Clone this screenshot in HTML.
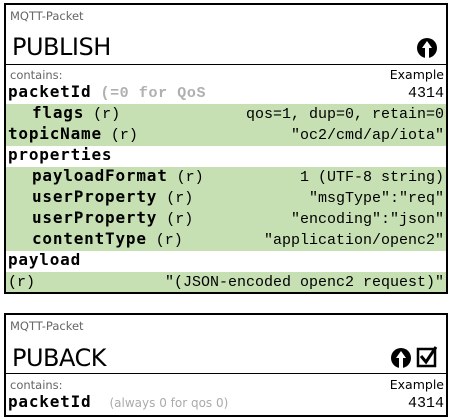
<!DOCTYPE html>
<html><head><style>
body{margin:0;background:#fff;width:452px;height:420px;position:relative;overflow:hidden}
.box{position:absolute;left:4px;width:440px;border:2px solid #000;}
.sm{position:absolute;left:4px;font:11.5px "DejaVu Sans",sans-serif;color:#666}
.title{position:absolute;left:6px;font:24px "DejaVu Sans",sans-serif;color:#000;letter-spacing:-0.5px}
.sep{position:absolute;left:0;right:0;height:1px;background:#000}
.ex{position:absolute;right:2px;font:12.5px "DejaVu Sans",sans-serif;color:#000}
.row{position:absolute;left:0;right:0;height:21px;font:15px "Liberation Mono","DejaVu Sans Mono",monospace;line-height:21px;white-space:pre}
.g{background:#c6e0b4}
.row b{font-family:"DejaVu Sans Mono",monospace;font-weight:bold;font-size:16px;letter-spacing:0.8px;line-height:10px}
.row .l{position:absolute;left:2px}
.row .i{left:26px}
.row .r{position:absolute;right:2px}
.gr{color:#b0b0b0;font-weight:bold;letter-spacing:0.6px}
</style></head><body>
<div class="box" style="top:3px;height:287px">
 <div class="sm" style="top:4px">MQTT-Packet</div>
 <div class="title" style="top:28px">PUBLISH</div>
 <svg style="position:absolute;left:410px;top:32px" width="22" height="22" viewBox="0 0 22 22"><circle cx="11" cy="11" r="10" fill="#000"/><path d="M9 21V11H6L11 4l5 7h-3v10z" fill="#fff"/></svg>
 <div class="sep" style="top:59px"></div>
 <div class="sm" style="top:63px">contains:</div>
 <div class="ex" style="top:62px">Example</div>
 <div class="row" style="top:78px"><span class="l"><b>packetId</b> <span class="gr">(=0 for QoS</span></span><span class="r">4314</span></div>
 <div class="row g" style="top:99px"><span class="l i"><b>flags</b> (r)</span><span class="r">qos=1, dup=0, retain=0</span></div>
 <div class="row g" style="top:120px"><span class="l"><b>topicName</b> (r)</span><span class="r">"oc2/cmd/ap/iota"</span></div>
 <div class="row" style="top:141px"><span class="l"><b>properties</b></span></div>
 <div class="row g" style="top:162px"><span class="l i"><b>payloadFormat</b> (r)</span><span class="r">1 (UTF-8 string)</span></div>
 <div class="row g" style="top:183px"><span class="l i"><b>userProperty</b> (r)</span><span class="r">"msgType":"req"</span></div>
 <div class="row g" style="top:204px"><span class="l i"><b>userProperty</b> (r)</span><span class="r">"encoding":"json"</span></div>
 <div class="row g" style="top:225px"><span class="l i"><b>contentType</b> (r)</span><span class="r">"application/openc2"</span></div>
 <div class="row" style="top:246px"><span class="l"><b>payload</b></span></div>
 <div class="row g" style="top:267px;height:20px"><span class="l">(r)</span><span class="r">"(JSON-encoded openc2 request)"</span></div>
</div>
<div class="box" style="top:313px;height:100px">
 <div class="sm" style="top:4px">MQTT-Packet</div>
 <div class="title" style="top:29px">PUBACK</div>
 <svg style="position:absolute;left:384px;top:32px" width="22" height="22" viewBox="0 0 22 22"><circle cx="11" cy="11" r="10" fill="#000"/><path d="M9 21V11H6L11 4l5 7h-3v10z" fill="#fff"/></svg>
 <svg style="position:absolute;left:410px;top:29px" width="24" height="24" viewBox="0 0 24 24"><rect x="2" y="5" width="17" height="17" fill="none" stroke="#000" stroke-width="2.5"/><path d="M5 12l5 6L20 3" fill="none" stroke="#000" stroke-width="3"/></svg>
 <div class="sep" style="top:58px"></div>
 <div class="sm" style="top:63px">contains:</div>
 <div class="ex" style="top:62px">Example</div>
 <div class="row" style="top:78px"><span class="l"><b>packetId</b>  <span style="font:12px 'DejaVu Sans',sans-serif;color:#aaa">(always 0 for qos 0)</span></span><span class="r">4314</span></div>
</div>
</body></html>
